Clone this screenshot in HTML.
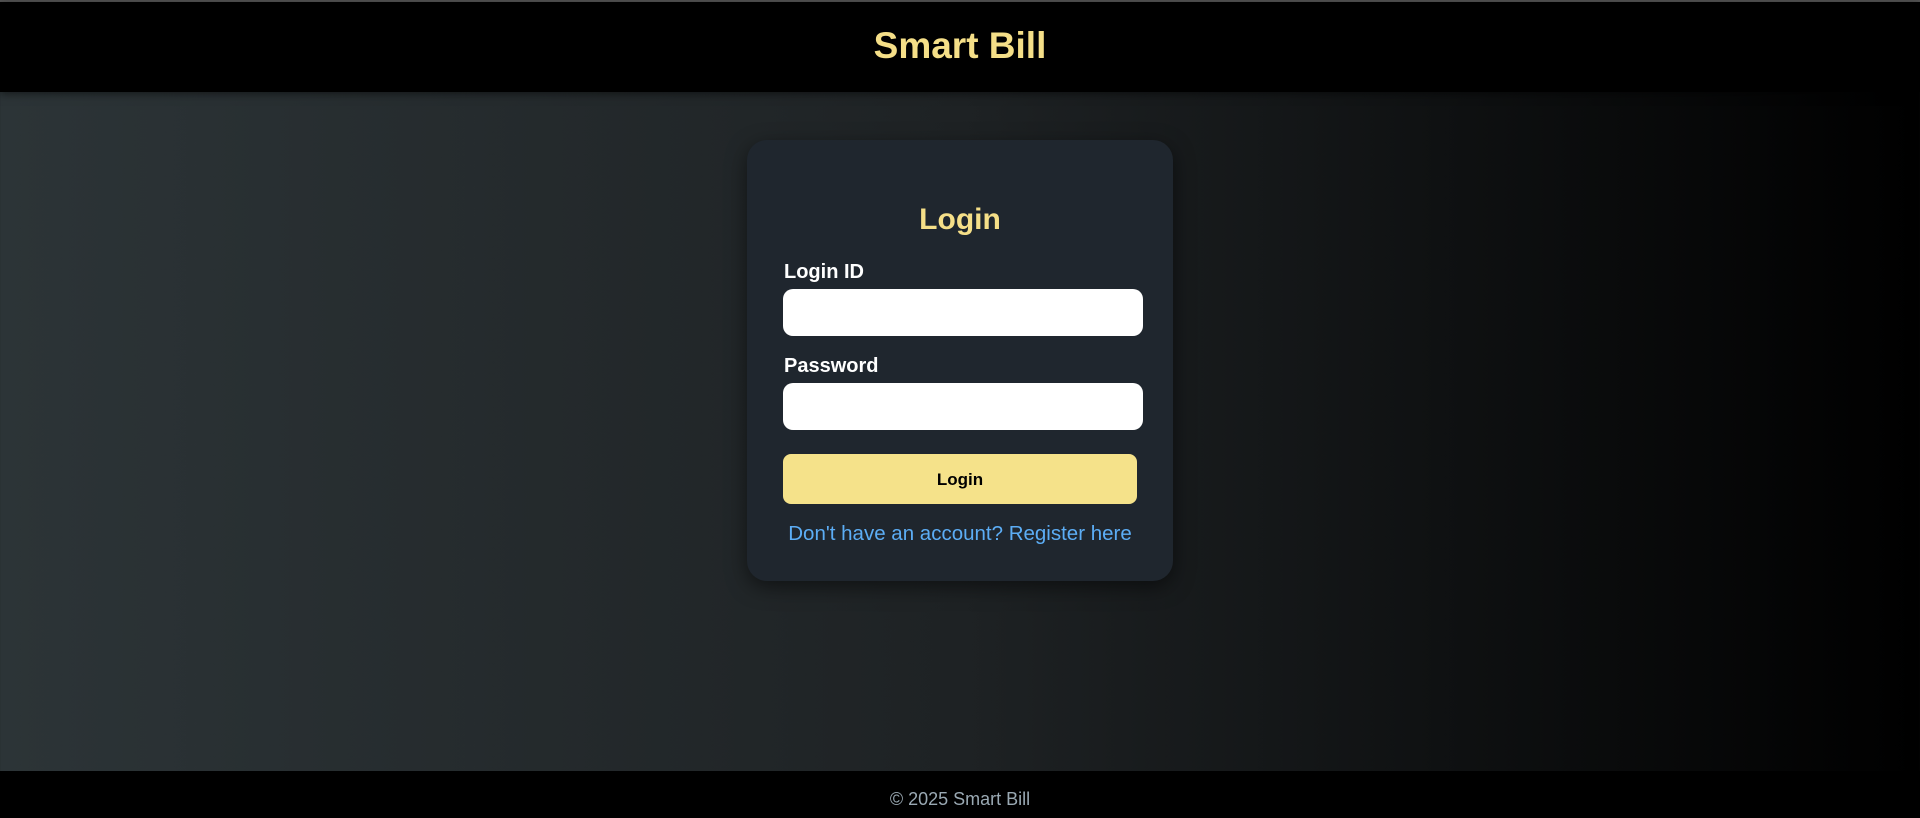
<!DOCTYPE html>
<html><head><meta charset="utf-8"><style>
*{box-sizing:border-box;margin:0;padding:0}
html,body{width:1920px;height:818px;overflow:hidden}
body{font-family:"Liberation Sans",Arial,sans-serif;background:linear-gradient(to right,#2c3437,#1e2224 50%,#000);position:relative}
.top{position:absolute;left:0;top:0;width:1920px;height:2px;background:#555}
header{position:absolute;left:0;top:2px;width:1920px;height:90px;background:#000;box-shadow:0 2px 8px rgba(0,0,0,.5)}
header h1{position:absolute;left:0;right:0;top:23px;text-align:center;color:#f5df88;font-size:37px;font-weight:bold;line-height:42px}
.card{position:absolute;left:747px;top:140px;width:426px;height:441px;background:#1f262e;border-radius:20px;box-shadow:0 6px 20px rgba(0,0,0,.5)}
.abs{position:absolute}
.lbl{color:#fff;font-size:20px;font-weight:bold;left:784px}
.inp{background:#fff;border-radius:10px;left:783px;width:360px;height:47px}
.btn{left:783px;top:454px;width:354px;height:50px;background:#f5e28a;border-radius:8px;color:#000;font-weight:bold;font-size:17px;text-align:center;line-height:51px}
.link{left:747px;width:426px;text-align:center;top:522px;color:#5cadf5;font-size:20.5px}
footer{position:absolute;left:0;top:771px;width:1920px;height:47px;background:#000;color:#9aa9b3;font-size:18px;text-align:center;line-height:56px}
</style></head><body>
<div class="top"></div>
<header><h1>Smart Bill</h1></header>
<div class="card"></div>
<div class="abs" style="left:0;right:0;top:201px;text-align:center;color:#f5df88;font-size:30px;font-weight:bold;line-height:38px">Login</div>
<div class="abs lbl" style="top:260px;line-height:24px">Login ID</div>
<div class="abs inp" style="top:289px"></div>
<div class="abs lbl" style="top:354px;line-height:24px">Password</div>
<div class="abs inp" style="top:383px"></div>
<div class="abs btn">Login</div>
<div class="abs link" style="line-height:24px">Don't have an account? Register here</div>
<footer>© 2025 Smart Bill</footer>
</body></html>
